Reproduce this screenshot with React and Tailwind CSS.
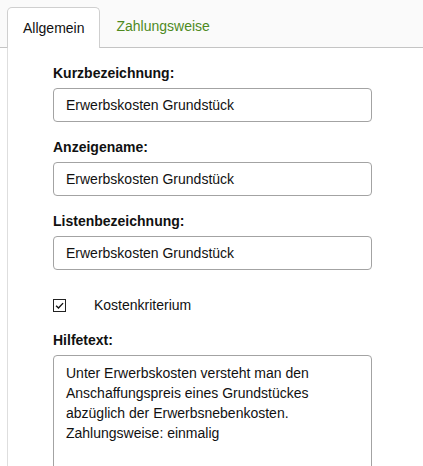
import React from "react";

const fields = [
  { label: "Kurzbezeichnung:", value: "Erwerbskosten Grundstück" },
  { label: "Anzeigename:", value: "Erwerbskosten Grundstück" },
  { label: "Listenbezeichnung:", value: "Erwerbskosten Grundstück" },
];

function Field({ label, value }) {
  return (
    <div className="mb-[15px]">
      <div className="h-5 text-[14px] leading-5 font-bold text-[#111]">{label}</div>
      <div className="mt-[5px] flex h-[34px] w-[319px] items-center rounded-[4px] border border-[#a3a3a3] px-3 text-[14px] text-[#111]">
        {value}
      </div>
    </div>
  );
}

export default function App() {
  return (
    <div className="min-h-[466px] bg-white font-['Liberation_Sans',Arial,sans-serif]">
      {/* tabs */}
      <div className="flex h-12 items-end border-b border-[#c4c4c4] bg-[#fafafa] pl-[7px]">
        <div className="-mb-px h-[41px] rounded-t-[5px] border border-b-0 border-[#cfcfcf] bg-white px-[15px] pt-[10px] text-[14px] leading-5 text-[#111]">
          Allgemein
        </div>
        <div className="h-[41px] px-4 pt-[10px] text-[14px] leading-5 text-[#4e8a1e]">
          Zahlungsweise
        </div>
      </div>

      {/* content */}
      <div className="ml-[7px] min-h-[418px] border-l border-[#dedede] pl-[45px] pt-[15px]">
        {fields.map((f) => (
          <Field key={f.label} {...f} />
        ))}

        <div className="mt-[25px] flex h-5 items-center">
          <span className="flex h-[13px] w-[13px] items-center justify-center border border-[#222] bg-white">
            <svg viewBox="0 0 12 12" className="h-[11px] w-[11px]">
              <path d="M2.3 6.2 4.9 8.8 9.9 3.4" stroke="#111" strokeWidth="1.5" fill="none" />
            </svg>
          </span>
          <span className="ml-[28px] text-[14px] text-[#111]">Kostenkriterium</span>
        </div>

        <div className="mt-[15px] h-5 text-[14px] leading-5 font-bold text-[#111]">Hilfetext:</div>
        <div className="mt-[5px] h-[130px] w-[319px] rounded-[4px] border border-[#a3a3a3] px-3 pt-[7px] text-[14px] leading-5 text-[#111]">
          Unter Erwerbskosten versteht man den
          <br />
          Anschaffungspreis eines Grundstückes
          <br />
          abzüglich der Erwerbsnebenkosten.
          <br />
          Zahlungsweise: einmalig
        </div>
      </div>
    </div>
  );
}
